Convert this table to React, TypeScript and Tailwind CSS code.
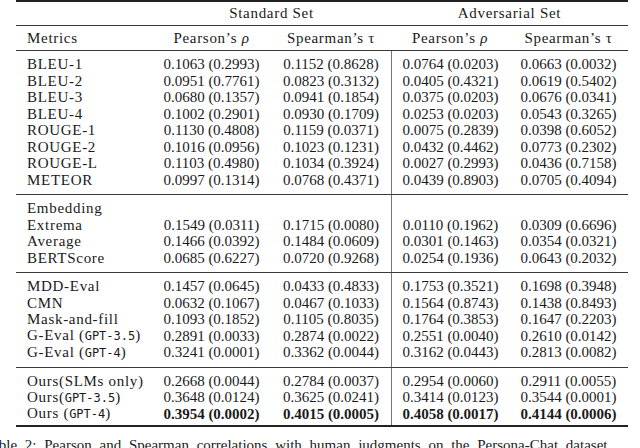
import React from "react";

type Row = { label: React.ReactNode; v: string[]; bold?: boolean };

const Mono = ({ children }: { children: React.ReactNode }) => (
  <span className="font-['DejaVu_Sans_Mono',monospace] text-[12px] tracking-normal">{children}</span>
);

const sec1: Row[] = [
  { label: "BLEU-1", v: ["0.1063 (0.2993)", "0.1152 (0.8628)", "0.0764 (0.0203)", "0.0663 (0.0032)"] },
  { label: "BLEU-2", v: ["0.0951 (0.7761)", "0.0823 (0.3132)", "0.0405 (0.4321)", "0.0619 (0.5402)"] },
  { label: "BLEU-3", v: ["0.0680 (0.1357)", "0.0941 (0.1854)", "0.0375 (0.0203)", "0.0676 (0.0341)"] },
  { label: "BLEU-4", v: ["0.1002 (0.2901)", "0.0930 (0.1709)", "0.0253 (0.0203)", "0.0543 (0.3265)"] },
  { label: "ROUGE-1", v: ["0.1130 (0.4808)", "0.1159 (0.0371)", "0.0075 (0.2839)", "0.0398 (0.6052)"] },
  { label: "ROUGE-2", v: ["0.1016 (0.0956)", "0.1023 (0.1231)", "0.0432 (0.4462)", "0.0773 (0.2302)"] },
  { label: "ROUGE-L", v: ["0.1103 (0.4980)", "0.1034 (0.3924)", "0.0027 (0.2993)", "0.0436 (0.7158)"] },
  { label: "METEOR", v: ["0.0997 (0.1314)", "0.0768 (0.4371)", "0.0439 (0.8903)", "0.0705 (0.4094)"] },
];

const sec2: Row[] = [
  { label: "Embedding", v: ["", "", "", ""] },
  { label: "Extrema", v: ["0.1549 (0.0311)", "0.1715 (0.0080)", "0.0110 (0.1962)", "0.0309 (0.6696)"] },
  { label: "Average", v: ["0.1466 (0.0392)", "0.1484 (0.0609)", "0.0301 (0.1463)", "0.0354 (0.0321)"] },
  { label: "BERTScore", v: ["0.0685 (0.6227)", "0.0720 (0.9268)", "0.0254 (0.1936)", "0.0643 (0.2032)"] },
];

const sec3: Row[] = [
  { label: "MDD-Eval", v: ["0.1457 (0.0645)", "0.0433 (0.4833)", "0.1753 (0.3521)", "0.1698 (0.3948)"] },
  { label: "CMN", v: ["0.0632 (0.1067)", "0.0467 (0.1033)", "0.1564 (0.8743)", "0.1438 (0.8493)"] },
  { label: "Mask-and-fill", v: ["0.1093 (0.1852)", "0.1105 (0.8035)", "0.1764 (0.3853)", "0.1647 (0.2203)"] },
  {
    label: (
      <>
        G-Eval (<Mono>GPT-3.5</Mono>)
      </>
    ),
    v: ["0.2891 (0.0033)", "0.2874 (0.0022)", "0.2551 (0.0040)", "0.2610 (0.0142)"],
  },
  {
    label: (
      <>
        G-Eval (<Mono>GPT-4</Mono>)
      </>
    ),
    v: ["0.3241 (0.0001)", "0.3362 (0.0044)", "0.3162 (0.0443)", "0.2813 (0.0082)"],
  },
];

const sec4: Row[] = [
  { label: "Ours(SLMs only)", v: ["0.2668 (0.0044)", "0.2784 (0.0037)", "0.2954 (0.0060)", "0.2911 (0.0055)"] },
  {
    label: (
      <>
        Ours(<Mono>GPT-3.5</Mono>)
      </>
    ),
    v: ["0.3648 (0.0124)", "0.3625 (0.0241)", "0.3414 (0.0123)", "0.3544 (0.0001)"],
  },
  {
    label: (
      <>
        Ours (<Mono>GPT-4</Mono>)
      </>
    ),
    v: ["0.3954 (0.0002)", "0.4015 (0.0005)", "0.4058 (0.0017)", "0.4144 (0.0006)"],
    bold: true,
  },
];

function Section({ rows, last }: { rows: Row[]; last?: boolean }) {
  return (
    <div className={last ? "flex border-b-2 border-[#222]" : "flex border-b border-[#3a3a3a]"}>
      <div className={last ? "w-[375px] pt-[5px] pb-[3px]" : "w-[375px] pt-[5px] pb-[6px]"}>
        {rows.map((r, i) => (
          <div key={i} className="flex h-[16.5px] items-center leading-[16.5px]">
            <div className="w-[136px] pl-[11px] whitespace-nowrap tracking-[0.7px]">{r.label}</div>
            <div className={r.bold ? "w-[119px] text-center font-bold" : "w-[119px] text-center"}>{r.v[0]}</div>
            <div className={r.bold ? "w-[120px] text-center font-bold" : "w-[120px] text-center"}>{r.v[1]}</div>
          </div>
        ))}
      </div>
      <div className={last ? "w-[237px] border-l border-[#777] pt-[5px] pb-[3px]" : "w-[237px] border-l border-[#777] pt-[5px] pb-[6px]"}>
        {rows.map((r, i) => (
          <div key={i} className="flex h-[16.5px] items-center leading-[16.5px]">
            <div className={r.bold ? "w-[117px] text-center font-bold" : "w-[117px] text-center"}>{r.v[2]}</div>
            <div className={r.bold ? "w-[119px] text-center font-bold" : "w-[119px] text-center"}>{r.v[3]}</div>
          </div>
        ))}
      </div>
    </div>
  );
}

export default function App() {
  return (
    <div className="w-[640px] h-[448px] overflow-hidden bg-white text-[#1a1a1a] font-['Liberation_Serif',serif] text-[15px]">
      <div className="ml-[16px] w-[612px]">
        <div className="border-t-2 border-[#222] border-b border-b-[#3a3a3a] flex h-[26px] items-center tracking-[0.7px]">
          <div className="w-[136px]" />
          <div className="w-[239px] text-center">Standard Set</div>
          <div className="w-[237px] text-center">Adversarial Set</div>
        </div>
        <div className="border-b border-[#3a3a3a] flex h-[25px] items-center tracking-[0.7px]">
          <div className="w-[136px] pl-[11px]">Metrics</div>
          <div className="w-[119px] text-center">
            Pearson’s <i>ρ</i>
          </div>
          <div className="w-[120px] text-center">Spearman’s τ</div>
          <div className="w-[118px] text-center">
            Pearson’s <i>ρ</i>
          </div>
          <div className="w-[119px] text-center">Spearman’s τ</div>
        </div>
        <Section rows={sec1} />
        <Section rows={sec2} />
        <Section rows={sec3} />
        <Section rows={sec4} last />
        <div className="ml-[-32px] mt-[7px] whitespace-nowrap [word-spacing:4px]">
          Table 2: Pearson and Spearman correlations with human judgments on the Persona-Chat dataset.
        </div>
      </div>
    </div>
  );
}
